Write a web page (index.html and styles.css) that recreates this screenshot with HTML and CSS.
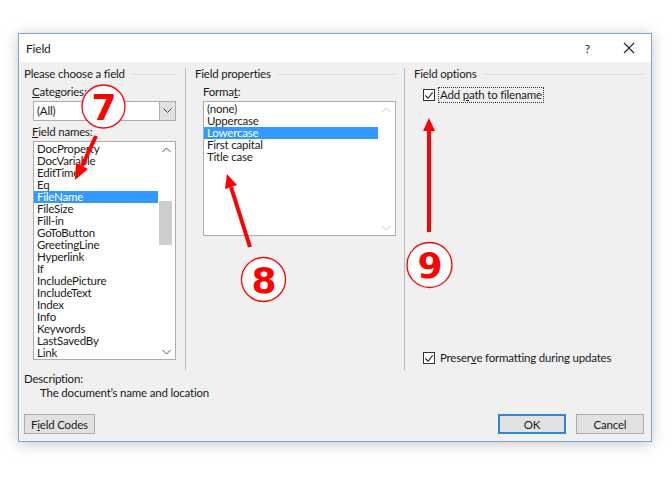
FILE: index.html
```html
<!DOCTYPE html>
<html lang="en">
<head>
    <meta charset="UTF-8">
    <title>Field</title>
    <link rel="stylesheet" href="styles.css">
</head>
<body>

    <div class="page">

        <!-- Field dialog -->
        <div class="dialog">
            <div class="titlebar">
                <span class="title">Field</span>
                <span class="help">?</span>
                <svg class="close" width="12" height="12" viewBox="0 0 12 12">
                    <path d="M1 1 L11 11 M11 1 L1 11" stroke="#222" stroke-width="1.1" fill="none"/>
                </svg>
            </div>

            <div class="dialog-body">
                <div class="columns">

                    <!-- Left: choose a field -->
                    <div class="col col-left">
                        <div class="group-title">Please choose a field</div>
                        <div class="label"><u>C</u>ategories:</div>
                        <div class="dropdown">
                            <span class="dropdown-value">(All)</span>
                            <span class="dropdown-button">
                                <svg width="9" height="6" viewBox="0 0 9 6"><path d="M0.5 0.5 L4.5 4.5 L8.5 0.5" stroke="#444" fill="none"/></svg>
                            </span>
                        </div>
                        <div class="label"><u>F</u>ield names:</div>
                        <div class="listbox names">
                            <ul class="items">
                                <li>DocProperty</li>
                                <li>DocVariable</li>
                                <li>EditTime</li>
                                <li>Eq</li>
                                <li class="selected">FileName</li>
                                <li>FileSize</li>
                                <li>Fill-in</li>
                                <li>GoToButton</li>
                                <li>GreetingLine</li>
                                <li>Hyperlink</li>
                                <li>If</li>
                                <li>IncludePicture</li>
                                <li>IncludeText</li>
                                <li>Index</li>
                                <li>Info</li>
                                <li>Keywords</li>
                                <li>LastSavedBy</li>
                                <li>Link</li>
                            </ul>
                            <div class="scrollbar">
                                <svg class="arrow" width="9" height="6" viewBox="0 0 9 6"><path d="M0.5 5 L4.5 1 L8.5 5" stroke="#555" fill="none"/></svg>
                                <div class="track"><div class="thumb"></div></div>
                                <svg class="arrow" width="9" height="6" viewBox="0 0 9 6"><path d="M0.5 1 L4.5 5 L8.5 1" stroke="#555" fill="none"/></svg>
                            </div>
                        </div>
                    </div>

                    <div class="divider"></div>

                    <!-- Middle: field properties -->
                    <div class="col col-middle">
                        <div class="group-title">Field properties</div>
                        <div class="label">Forma<u>t</u>:</div>
                        <div class="listbox formats">
                            <ul class="items">
                                <li>(none)</li>
                                <li>Uppercase</li>
                                <li class="selected">Lowercase</li>
                                <li>First capital</li>
                                <li>Title case</li>
                            </ul>
                            <div class="scrollbar disabled">
                                <svg class="arrow" width="9" height="6" viewBox="0 0 9 6"><path d="M0.5 5 L4.5 1 L8.5 5" stroke="#c8c8c8" fill="none"/></svg>
                                <div class="track"></div>
                                <svg class="arrow" width="9" height="6" viewBox="0 0 9 6"><path d="M0.5 1 L4.5 5 L8.5 1" stroke="#c8c8c8" fill="none"/></svg>
                            </div>
                        </div>
                    </div>

                    <div class="divider"></div>

                    <!-- Right: field options -->
                    <div class="col col-right">
                        <div class="group-title">Field options</div>
                        <label class="check focused">
                            <span class="box"><svg width="11" height="11" viewBox="0 0 11 11"><path d="M1.5 5.5 L4.5 8.5 L9.5 2" stroke="#222" stroke-width="1.2" fill="none"/></svg></span>
                            <span class="check-text">Add <u>p</u>ath to filename</span>
                        </label>
                        <label class="check bottom">
                            <span class="box"><svg width="11" height="11" viewBox="0 0 11 11"><path d="M1.5 5.5 L4.5 8.5 L9.5 2" stroke="#222" stroke-width="1.2" fill="none"/></svg></span>
                            <span class="check-text">Preser<u>v</u>e formatting during updates</span>
                        </label>
                    </div>
                </div>

                <div class="description">
                    <div>Description:</div>
                    <div class="description-text">The document’s name and location</div>
                </div>

                <div class="buttons">
                    <button class="btn">F<u>i</u>eld Codes</button>
                    <span class="spacer"></span>
                    <button class="btn default">OK</button>
                    <button class="btn">Cancel</button>
                </div>
            </div>
        </div>

        <!-- Numbered callouts drawn over the dialog -->
        <svg class="callouts" width="672" height="480" viewBox="0 0 672 480">
            <g class="arrows" fill="#ff0000" stroke="#ff0000">
                <line x1="96" y1="136" x2="82" y2="166" stroke-width="4"/>
                <polygon points="75,180 76,163 88,169" stroke="none"/>
                <line x1="250" y1="247" x2="231" y2="187" stroke-width="4"/>
                <polygon points="227,174 225,189 237,185" stroke="none"/>
                <line x1="429" y1="232" x2="429" y2="130" stroke-width="4"/>
                <polygon points="429,118 423,131 435,131" stroke="none"/>
            </g>
            <g class="badges" fill="#fff" stroke="#ff0000" stroke-width="1.3">
                <circle cx="103.5" cy="106.5" r="21.5"/>
                <circle cx="263.5" cy="279.5" r="22"/>
                <circle cx="429.5" cy="265" r="22.5"/>
            </g>
            <g class="digits" fill="#ff0000">
                <text x="104" y="120">7</text>
                <text x="264" y="293">8</text>
                <text x="430" y="278">9</text>
            </g>
        </svg>
    </div>

</body>
</html>
```

FILE: styles.css
```css
* {
    margin: 0;
    padding: 0;
    box-sizing: border-box;
}

body {
    background: #fff;
    font-family: Lato, "Noto Sans", sans-serif;
    font-size: 11.5px;
    letter-spacing: -0.2px;
    color: #1a1a1a;
}

.page {
    position: relative;
    width: 672px;
    height: 480px;
    padding: 33px 0 0 18px;
}

/* Dialog frame */
.dialog {
    width: 634px;
    height: 409px;
    border: 1px solid #7ea6d4;
    background: #f0f0f0;
    box-shadow: 0 2px 14px rgba(0, 0, 0, 0.22);
    display: flex;
    flex-direction: column;
}

.titlebar {
    height: 28px;
    background: #fff;
    display: flex;
    align-items: center;
    padding: 0 16px 0 7px;
    flex-shrink: 0;
    font-size: 12px;
}

.title {
    flex: 1;
}

.help {
    margin-right: 33px;
}

.dialog-body {
    flex: 1;
    display: flex;
    flex-direction: column;
    padding: 4px 7px 7px 5px;
}

/* Three columns */
.columns {
    display: flex;
    height: 304px;
}

.col {
    display: flex;
    flex-direction: column;
}

.col-left {
    width: 152px;
}

.col-middle {
    width: 201px;
}

.col-right {
    width: 230px;
}

.divider {
    width: 1px;
    background: #b9b9b9;
    margin: 2px 9px 0 9px;
}

.col-middle + .divider {
    margin-left: 8px;
}

.group-title {
    display: flex;
    align-items: center;
    height: 16px;
    line-height: 16px;
    white-space: nowrap;
}

.group-title::after {
    content: "";
    flex: 1;
    height: 1px;
    background: #dcdcdc;
    margin-left: 6px;
}

.label {
    height: 16px;
    line-height: 16px;
    margin: 2px 0 1px 8px;
}

/* Categories dropdown */
.dropdown {
    display: flex;
    height: 20px;
    margin-left: 9px;
    border: 1px solid #adadad;
    background: #fff;
    margin-bottom: 1px;
}

.dropdown-value {
    flex: 1;
    line-height: 18px;
    padding-left: 3px;
}

.dropdown-button {
    width: 16px;
    background: #e1e1e1;
    border-left: 1px solid #adadad;
    display: flex;
    align-items: center;
    justify-content: center;
}

/* List boxes */
.listbox {
    display: flex;
    border: 1px solid #adadad;
    background: #fff;
    overflow: hidden;
}

.names {
    margin-left: 9px;
    height: 219px;
}

.formats {
    margin-left: 8px;
    height: 135px;
}

.items {
    list-style: none;
    flex: 1;
    padding-top: 1px;
}

.items li {
    height: 12px;
    line-height: 12px;
    padding-left: 3px;
    white-space: nowrap;
}

.items .selected {
    background: #3399ff;
    color: #fff;
}

.scrollbar {
    width: 17px;
    display: flex;
    flex-direction: column;
    align-items: center;
    padding: 5px 0 4px;
}

.scrollbar .track {
    flex: 1;
    width: 100%;
    padding-top: 48px;
}

.thumb {
    width: 13px;
    height: 44px;
    margin-left: 1px;
    background: #cdcdcd;
}

/* Check boxes */
.check {
    display: flex;
    align-items: center;
    margin-left: 9px;
    height: 16px;
}

.col-right .check:first-of-type {
    margin-top: 5px;
}

.check.bottom {
    margin-top: auto;
    margin-bottom: 4px;
}

.box {
    width: 12px;
    height: 12px;
    border: 1px solid #333;
    background: #fff;
    display: flex;
    align-items: center;
    justify-content: center;
    margin-right: 3px;
}

.check-text {
    padding: 0 1px;
    line-height: 14px;
    border: 1px dotted transparent;
}

.focused .check-text {
    border-color: #333;
}

/* Description */
.description {
    line-height: 14px;
    margin-top: 2px;
}

.description-text {
    padding-left: 16px;
}

/* Buttons */
.buttons {
    display: flex;
    margin-top: auto;
    gap: 10px;
}

.spacer {
    flex: 1;
}

.btn {
    height: 20px;
    min-width: 68px;
    padding: 0 6px;
    font-family: inherit;
    font-size: 11.5px;
    letter-spacing: -0.2px;
    color: #1a1a1a;
    background: #e1e1e1;
    border: 1px solid #adadad;
}

.btn.default {
    border: 2px solid #2f86d6;
}

/* Callouts */
.callouts {
    position: absolute;
    top: 0;
    left: 0;
    pointer-events: none;
}

.digits text {
    font-family: "DejaVu Sans", sans-serif;
    font-weight: bold;
    font-size: 36px;
    letter-spacing: 0;
    text-anchor: middle;
}
```
